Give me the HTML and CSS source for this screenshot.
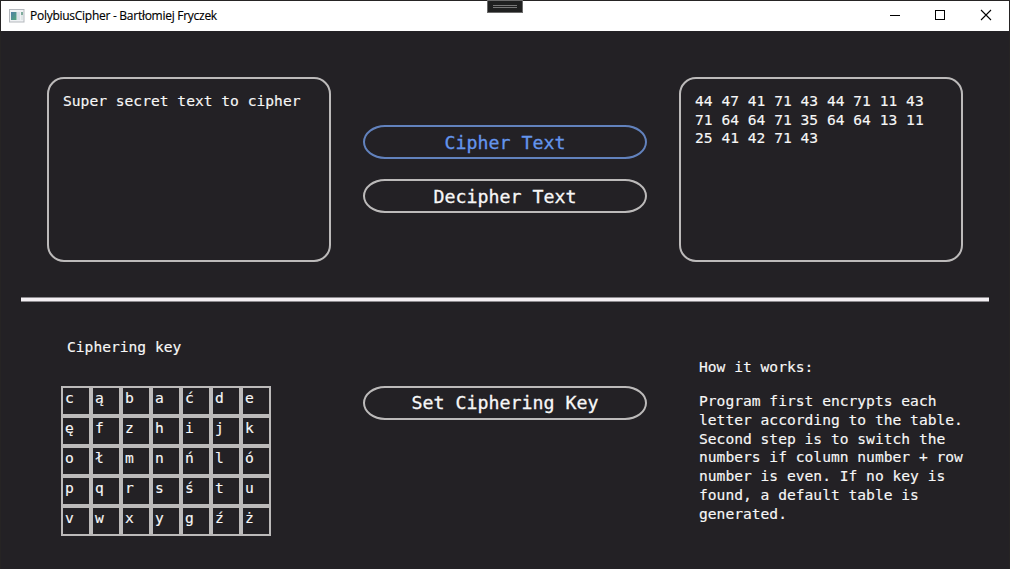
FILE: index.html
```html
<!DOCTYPE html>
<html lang="en">
<head>
<meta charset="utf-8">
<title>PolybiusCipher - Bartłomiej Fryczek</title>
<link rel="stylesheet" href="styles.css">
</head>
<body>
<div class="window">
  <header class="titlebar">
    <svg class="app-icon" width="16" height="14" viewBox="0 0 16 14">
      <defs><linearGradient id="pane" x1="0" y1="0" x2="1" y2="1"><stop offset="0" stop-color="#4f7fa6"/><stop offset="1" stop-color="#55a67c"/></linearGradient></defs>
      <rect x=".5" y=".5" width="14.5" height="12.5" fill="#f0f2f4" stroke="#b5b9be"/>
      <rect x="2" y="3" width="5.5" height="8" fill="url(#pane)"/>
      <rect x="8" y="3" width="3" height="8" fill="#dce1e8"/>
      <rect x="12" y="3" width="2" height="3" fill="#7fac9c"/>
      <rect x="12" y="6" width="2" height="5" fill="#dfe6e6"/>
    </svg>
    <span class="title">PolybiusCipher - Bartłomiej Fryczek</span>
    <div class="controls">
      <svg width="46" height="30" viewBox="0 0 46 30" shape-rendering="crispEdges"><path d="M19 14.5h10" stroke="#000"/></svg>
      <svg width="46" height="30" viewBox="0 0 46 30" shape-rendering="crispEdges"><rect x="18.5" y="9.5" width="9" height="9" fill="none" stroke="#000"/></svg>
      <svg width="46" height="30" viewBox="0 0 46 30"><path d="M18 9l10 10M28 9l-10 10" stroke="#000" stroke-width="1.1"/></svg>
    </div>
  </header>
  <div class="debug-handle"><span></span><span></span></div>

  <main class="content">
    <section class="row top">
      <div class="textbox">Super secret text to cipher</div>
      <div class="actions">
        <button class="btn active">Cipher Text</button>
        <button class="btn">Decipher Text</button>
      </div>
      <div class="textbox output">44 47 41 71 43 44 71 11 43<br>71 64 64 71 35 64 64 13 11<br>25 41 42 71 43</div>
    </section>
    <div class="divider"></div>
    <section class="row bottom">
      <div class="key">
        <div class="key-label">Ciphering key</div>
        <div class="key-table">
          <span>c</span><span>ą</span><span>b</span><span>a</span><span>ć</span><span>d</span><span>e</span>
          <span>ę</span><span>f</span><span>z</span><span>h</span><span>i</span><span>j</span><span>k</span>
          <span>o</span><span>ł</span><span>m</span><span>n</span><span>ń</span><span>l</span><span>ó</span>
          <span>p</span><span>q</span><span>r</span><span>s</span><span>ś</span><span>t</span><span>u</span>
          <span>v</span><span>w</span><span>x</span><span>y</span><span>g</span><span>ź</span><span>ż</span>
        </div>
      </div>
      <div class="set-key"><button class="btn">Set Ciphering Key</button></div>
      <div class="help">
        <p>How it works:</p>
        <p>Program first encrypts each<br>letter according to the table.<br>Second step is to switch the<br>numbers if column number + row<br>number is even. If no key is<br>found, a default table is<br>generated.</p>
      </div>
    </section>
  </main>
</div>
</body>
</html>
```
FILE: styles.css
```css
* { box-sizing: border-box; }
body { margin: 0; overflow: hidden; background: #232125; }
.window {
  position: relative;
  display: flex;
  flex-direction: column;
  width: 1010px;
  height: 569px;
  border: 1px solid #262424;
  border-bottom: 0;
  background: #232125;
  color: #f7f7f7;
  font: 14.61px/18.75px "DejaVu Sans Mono", monospace;
  -webkit-text-stroke: 0.15px currentColor;
}
.titlebar {
  display: flex;
  align-items: center;
  height: 30px;
  padding-left: 8px;
  background: #fff;
  color: #000;
}
.app-icon { flex: none; margin-bottom: 1px; }
.title {
  margin-left: 5px;
  font: 12px/16px "Open Sans", "Noto Sans", sans-serif;
  letter-spacing: -0.27px;
  white-space: nowrap;
}
.controls { display: flex; margin-left: auto; }
.debug-handle {
  position: absolute;
  top: -1px;
  left: 486px;
  display: flex;
  flex-direction: column;
  align-items: center;
  gap: 1px;
  width: 36px;
  height: 13px;
  padding-top: 4px;
  border: 1px solid #6b6b6b;
  background: #1f2020;
}
.debug-handle span { width: 24px; height: 1px; background: #777; }

.content { display: flex; flex-direction: column; }
.row {
  display: grid;
  grid-template-columns: repeat(3, 284px);
  column-gap: 32px;
  padding: 0 46px;
}
.top { padding-top: 46px; }
.textbox {
  height: 185px;
  padding: 13px 14px;
  border: 2px solid #bcbaba;
  border-radius: 17px;
  white-space: nowrap;
}
.output { line-height: 18.5px; }
.actions { display: flex; flex-direction: column; gap: 20px; padding-top: 48px; }
.btn {
  display: flex;
  justify-content: center;
  width: 284px;
  height: 34px;
  padding: 3px 0 0;
  border: 2px solid #bcbaba;
  border-radius: 22px / 17px;
  background: transparent;
  color: #f7f7f7;
  font: 18.27px/24px "DejaVu Sans Mono", monospace;
  -webkit-text-stroke: 0.3px currentColor;
}
.actions .btn { padding-top: 4px; }
.btn.active { border-color: #6282bd; color: #6495ed; }
.divider {
  height: 5px;
  margin: 35px 20px 0;
  border: solid #8d8b8f;
  border-width: 1px 0;
  background: #f3eff3;
}
.key { padding: 36px 0 0 14px; }
.key-label { padding-left: 6px; }
.key-table {
  display: grid;
  grid-template-columns: repeat(7, 30px);
  grid-auto-rows: 30px;
  width: 210px;
  margin-top: 29px;
}
.key-table span { padding-left: 2px; border: 2px solid #bcbaba; line-height: 19px; }
.set-key { padding-top: 84px; }
.help { padding: 56px 0 0 20px; white-space: nowrap; }
.help p { margin: 0 0 15.3px; }
```
